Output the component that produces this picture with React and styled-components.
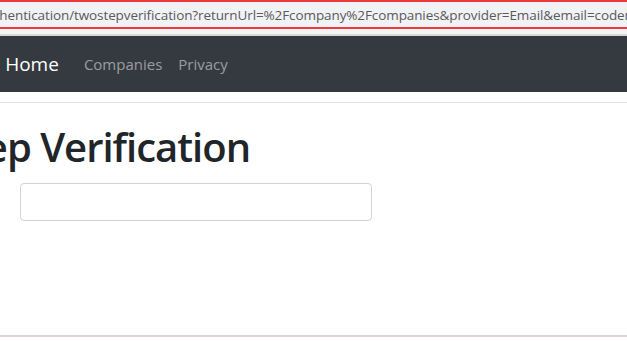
import React from 'react'
import styled, { createGlobalStyle } from 'styled-components'

const GlobalStyle = createGlobalStyle`
  html, body {
    margin: 0;
    padding: 0;
    background: #fff;
    overflow: hidden;
  }
  body {
    font-family: 'Open Sans', 'Noto Sans', sans-serif;
    color: #212529;
  }
`

const Page = styled.div`
  width: 627px;
  height: 341px;
  display: flex;
  flex-direction: column;
  overflow: hidden;
`

const AddressBar = styled.div`
  height: 25px;
  border-top: 2px solid #f03a3a;
  border-bottom: 2px solid #f03a3a;
  background: #f1f2f5;
  display: flex;
  align-items: center;
  overflow: hidden;
  white-space: nowrap;
`

const Url = styled.span`
  font-size: 13.5px;
  color: #5a5a5a;
  letter-spacing: -0.1px;
  margin-left: -21px;
`

const Strip = styled.div`
  height: 5px;
  background: #f4f4f4;
  border-bottom: 2px solid #d8d8d8;
`

const Navbar = styled.nav`
  height: 56px;
  background: #343a40;
  display: flex;
  align-items: center;
  white-space: nowrap;
`

const Brand = styled.a`
  font-size: 19px;
  color: #fff;
  text-decoration: none;
  margin-left: -180px;
  margin-right: 25px;
`

const NavLink = styled.a`
  font-size: 15px;
  color: rgba(255, 255, 255, 0.5);
  text-decoration: none;
  margin-right: 16px;
`

const Divider = styled.hr`
  margin: 10px 0 0;
  border: 0;
  border-top: 1px solid #dee2e6;
`

const Main = styled.main`
  flex: 1;
  display: flex;
  flex-direction: column;
`

const Title = styled.h1`
  margin: 20px 0 0 -137px;
  font-size: 40px;
  font-weight: 600;
  letter-spacing: -1px;
  line-height: 1.2;
  white-space: nowrap;
`

const CodeInput = styled.input`
  margin: 12px 0 0 20px;
  width: 352px;
  height: 38px;
  box-sizing: border-box;
  border: 1px solid #ced4da;
  border-radius: 4px;
  font-size: 16px;
  padding: 6px 12px;
  outline: none;
`

const Footer = styled.footer`
  margin-top: auto;
  margin-bottom: 4px;
  border-top: 2px solid #dbd3d6;
  height: 0;
`

export default function App() {
  return (
    <Page>
      <GlobalStyle />
      <AddressBar>
        <Url>authentication/twostepverification?returnUrl=%2Fcompany%2Fcompanies&amp;provider=Email&amp;email=codemaze@gmail.com</Url>
      </AddressBar>
      <Strip />
      <Navbar>
        <Brand href='#'>CompanyEmployees Home</Brand>
        <NavLink href='#'>Companies</NavLink>
        <NavLink href='#'>Privacy</NavLink>
      </Navbar>
      <Divider />
      <Main>
        <Title>Two Step Verification</Title>
        <CodeInput type='text' />
      </Main>
      <Footer />
    </Page>
  )
}
